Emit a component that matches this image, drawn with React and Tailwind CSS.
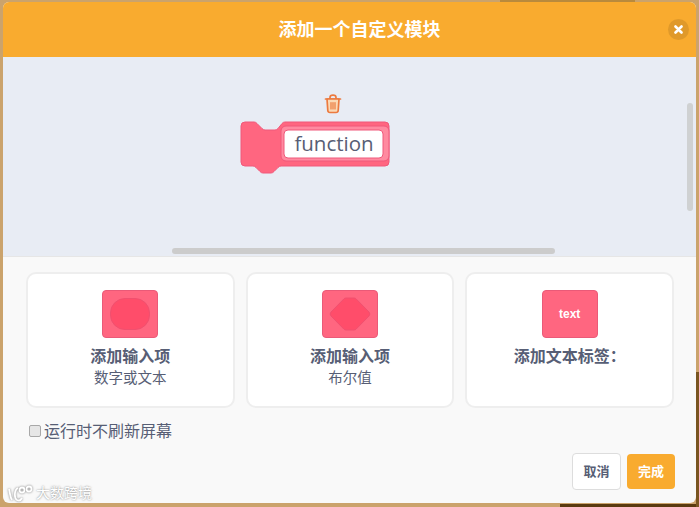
const font = { fontFamily: '"Open Sans", "Noto Sans CJK SC", sans-serif' };

const BlockIcon = ({ children }) => (
  <div className="flex h-[48px] w-[56px] items-center justify-center rounded-[4px] border border-[#ea5a78] bg-[#ff6680]">
    {children}
  </div>
);

const OptionCard = ({ icon, title, sub }) => (
  <div className="flex h-[136px] flex-1 flex-col items-center rounded-[10px] border-2 border-[#eeeeee] bg-white pt-[16px]">
    <BlockIcon>{icon}</BlockIcon>
    <div className="mt-[7px] text-[16px] leading-[22px] font-bold text-[#575e75]">{title}</div>
    {sub && <div className="mt-[1px] text-[14.5px] leading-[20px] text-[#575e75]">{sub}</div>}
  </div>
);

const TrashIcon = () => (
  <svg width="18" height="20" viewBox="0 0 18 20" fill="none" stroke="#ec7a3f" strokeWidth="1.7" strokeLinecap="round" strokeLinejoin="round">
    <path d="M1.500 5h15" />
    <path d="M6 5V3.500C6 2.200 7 1.200 9 1.200s3 1 3 2.300V5" />
    <path d="M3 5l.8 11.500c.1 1.200 1 2 2.200 2h6c1.200 0 2.100-.8 2.200-2L15 5z" fill="#fbd9b5" />
    <path d="M7 8.500v6.500M9 8.500v6.500M11 8.500v6.500" strokeWidth="1.200" />
  </svg>
);

const FunctionBlock = () => (
  <svg width="152" height="54" viewBox="0 0 152 54" className="overflow-visible">
    <path
      d="M1 4a4 4 0 0 1 4-4h9a4 4 0 0 1 3 1.500l5 5a4 4 0 0 0 3 1.500h10a4 4 0 0 0 3-1.500l4-5a4 4 0 0 1 3-1.500h100a4 4 0 0 1 4 4v36a4 4 0 0 1-4 4H41a4 4 0 0 0-3 1.500l-4 4a4 4 0 0 1-3 1.500h-8a4 4 0 0 1-3-1.500l-4-4a4 4 0 0 0-3-1.500H5a4 4 0 0 1-4-4z"
      fill="#ff6680"
      stroke="#f0587a"
      strokeWidth="1"
    />
    <rect x="41" y="4" width="108" height="35" rx="5" fill="#ff8aa0" stroke="#f0587a" strokeWidth="1" />
    <rect x="44" y="8" width="99" height="28" rx="4" fill="#ffffff" stroke="#f0587a" strokeWidth="1" />
    <text x="94" y="29" textAnchor="middle" fontSize="20.500" fill="#575e75" fontFamily="Open Sans, sans-serif">
      function
    </text>
  </svg>
);

export default function App() {
  return (
    <div className="relative h-[507px] w-[699px] overflow-hidden bg-[#cba36c] pt-[2px] pr-[3px] pb-[4px] pl-[3px]" style={font}>
      <div className="absolute top-0 left-[500px] h-[2px] w-[135px] bg-[#b98a3c]" />
      <div className="absolute bottom-0 left-[560px] h-[3px] w-[139px] bg-[#5a3a10]" />
      <div className="absolute top-[372px] right-0 h-[135px] w-[3px] bg-[#7a5520]" />
      <div className="relative flex h-full flex-col overflow-hidden rounded-[6px] bg-[#f9f9f9]">
        <div className="relative flex h-[55px] shrink-0 items-center justify-center bg-[#f9ab2f] pl-[20px]">
          <span className="text-[18px] font-bold text-white">添加一个自定义模块</span>
          <button className="absolute top-[17px] right-[7px] flex h-[21px] w-[21px] items-center justify-center rounded-full bg-[#e0992a]">
            <svg width="9" height="9" viewBox="0 0 9 9" stroke="#ffffff" strokeWidth="2.600" strokeLinecap="round">
              <path d="M1.500 1.500l6 6M7.500 1.500l-6 6" />
            </svg>
          </button>
        </div>

        <div className="relative h-[199px] shrink-0 bg-[#e8ecf4]">
          <div className="absolute top-[37px] left-[321px]">
            <TrashIcon />
          </div>
          <div className="absolute top-[65px] left-[237px]">
            <FunctionBlock />
          </div>
          <div className="absolute top-[46px] right-[3px] h-[108px] w-[6px] rounded-full bg-[#cfd1d2]" />
          <div className="absolute bottom-[2px] left-[169px] h-[6px] w-[383px] rounded-full bg-[#cccccc]" />
        </div>

        <div className="relative flex-1 border-t border-[#e6e6e6] pt-[15px] pr-[22px] pl-[23px]">
          <div className="flex gap-[11px]">
            <OptionCard
              title="添加输入项"
              sub="数字或文本"
              icon={<div className="h-[32px] w-[40px] rounded-[15px] border border-[#f0506f] bg-[#ff4d6a]" />}
            />
            <OptionCard
              title="添加输入项"
              sub="布尔值"
              icon={
                <svg width="42" height="34" viewBox="0 0 42 34">
                  <path d="M17 1h8a3 3 0 0 1 2.200 1L40 15a3 3 0 0 1 0 4L27.200 32a3 3 0 0 1-2.200 1h-8a3 3 0 0 1-2.200-1L2 19a3 3 0 0 1 0-4L14.800 2a3 3 0 0 1 2.200-1z" fill="#ff4d6a" stroke="#f0506f" />
                </svg>
              }
            />
            <OptionCard
              title="添加文本标签："
              icon={<span className="text-[12px] font-bold text-white" style={{ fontFamily: '"Liberation Sans", sans-serif' }}>text</span>}
            />
          </div>

          <label className="mt-[12px] ml-[3px] flex items-center gap-[3px] text-[16px] leading-[22px] text-[#575e75]">
            <span className="h-[12px] w-[12px] rounded-[2px] border border-[#a8a8a8] bg-[#e6e6e6]" />
            运行时不刷新屏幕
          </label>

          <div className="absolute right-[21px] bottom-[13px] flex items-center gap-[6px]">
            <button className="h-[37px] w-[49px] rounded-[4px] border border-[#dddddd] bg-white text-[13px] font-bold text-[#575e75]">取消</button>
            <button className="h-[35px] w-[48px] rounded-[4px] bg-[#f9ab2f] text-[13px] font-bold text-white">完成</button>
          </div>

          <div className="absolute bottom-[1px] left-[4px] flex items-center gap-[1px] text-[14px] leading-[18px] text-white [text-shadow:0_0_2px_#777777]">
            <svg width="28" height="17" viewBox="0 0 28 17" fill="none" stroke="#ffffff" strokeWidth="1.800" style={{ filter: "drop-shadow(0 0 1px #777777)" }}>
              <path d="M2 4c1 4 1 8 3 11M11 3C7 5 7 13 10 15c2 1 4 0 5-2" />
              <circle cx="15" cy="5" r="2.500" />
              <circle cx="22" cy="4" r="2.500" />
            </svg>
            大数跨境
          </div>
        </div>
      </div>
    </div>
  );
}
